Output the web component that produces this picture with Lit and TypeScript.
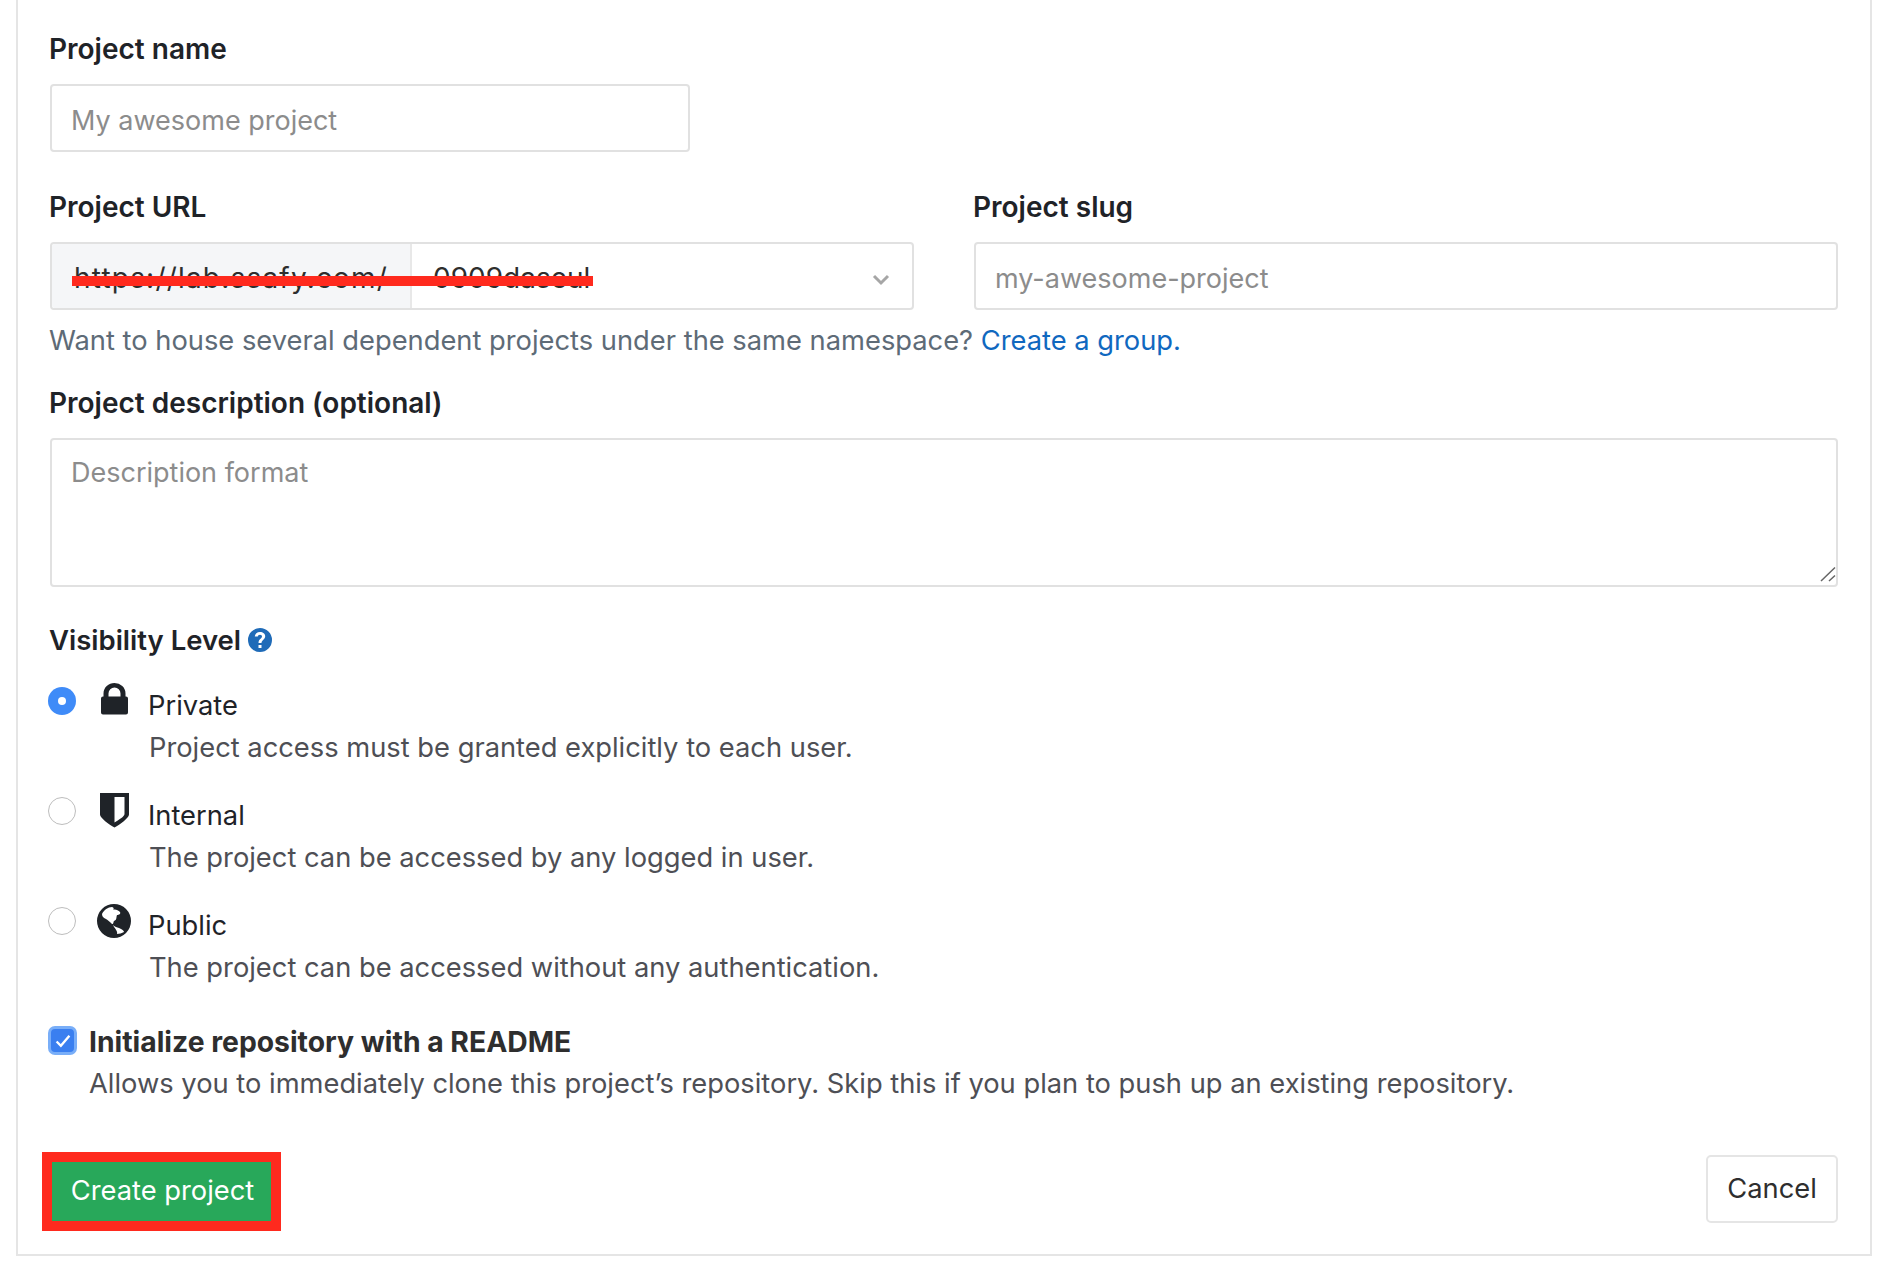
import { LitElement, html, css, svg } from "lit";
import { customElement } from "lit/decorators.js";

const lock = svg`<path fill-rule="evenodd" d="M2.500 13.500V10.500a11 10.500 0 0 1 22 0v3h.5a2 2 0 0 1 2 2V29.500a2 2 0 0 1-2 2H2a2 2 0 0 1-2-2V15.500a2 2 0 0 1 2-2zM7.500 13.500h12V10.500a6 6 0 0 0-12 0z"/>`;
const shield = svg`<path fill-rule="evenodd" d="M0 0h29v21.500c0 3.500-9 10-14.500 13C9 31.500 0 25 0 21.500zM14.500 4v25.500c4-2.500 10-6 10-8.500V4z"/>`;

@customElement("app-root")
export class AppRoot extends LitElement {
  static styles = css`
    :host {
      display: block;
      height: 1272px;
      box-sizing: border-box;
      padding: 0 14px 0 16px;
      background: #fff;
      font-family: Inter, "Liberation Sans", sans-serif;
      font-size: 27.300px;
      line-height: 36px;
      color: #1f2328;
    }
    .panel {
      box-sizing: border-box;
      height: 1256px;
      border: 2px solid #e5e5e5;
      border-top: 0;
      padding: 30px 32px 0 32px;
    }
    label.title {
      display: block;
      font-size: 28px;
      font-weight: 600;
      padding-top: 1px;
      margin: 0 0 17px -1px;
    }
    label.desc-label { margin-top: 25px; }
    .field {
      box-sizing: border-box;
      display: block;
      width: 100%;
      height: 68px;
      padding: 4px 19px 0;
      border: 2px solid #e1e1e1;
      border-radius: 4px;
      background: #fff;
      color: #2e2e2e;
      font: inherit;
      font-size: 27px;
      outline: none;
    }
    .field::placeholder { color: #8c8c8c; opacity: 1; }
    .name { width: 640px; }
    .url-row {
      display: grid;
      grid-template-columns: 864px 864px;
      column-gap: 60px;
      margin-top: 36px;
    }
    .group {
      position: relative;
      display: flex;
      height: 68px;
      box-sizing: border-box;
      border: 2px solid #e1e1e1;
      border-radius: 4px;
      align-items: center;
      color: #2e2e2e;
      font-size: 28px;
    }
    .addon {
      width: 360px;
      height: 100%;
      flex: none;
      box-sizing: border-box;
      padding: 4px 0 0 22px;
      letter-spacing: 1.200px;
      background: #f5f6f8;
      border-right: 2px solid #e8e8e8;
      border-radius: 3px 0 0 3px;
      display: flex;
      align-items: center;
      white-space: nowrap;
    }
    .ns {
      flex: 1;
      padding: 4px 22px 0 21px;
      display: flex;
      align-items: center;
      justify-content: space-between;
    }
    .chev { width: 18px; height: 12px; fill: none; stroke: #a6a6a6; stroke-width: 3; margin-top: 4px; }
    .redact {
      position: absolute;
      left: 20px;
      top: 32px;
      width: 521px;
      height: 10px;
      background: #ff2a1e;
    }
    .help { margin: 13px 0 0 -1px; color: #5e6b77; }
    a { color: #1068bf; text-decoration: none; }
    .area { position: relative; }
    textarea.field {
      height: 149px;
      padding-top: 15px;
      resize: none;
    }
    .grip {
      position: absolute;
      right: 2px;
      bottom: 5px;
      width: 16px;
      height: 16px;
      fill: none;
      stroke: #666;
      stroke-width: 1.500;
    }
    .vis-label {
      margin: 35px 0 0 -1px;
      font-size: 27.500px;
      font-weight: 600;
      display: flex;
      align-items: center;
      gap: 7px;
    }
    .vis-label svg { width: 24px; height: 24px; }
    .options { margin-top: 29px; display: flex; flex-direction: column; gap: 31px; }
    .opt {
      display: grid;
      grid-template-columns: 28px 73px 1fr;
      row-gap: 6px;
      margin-left: -2px;
    }
    .opt-name { margin-left: -1px; padding-top: 1px; }
    .radio {
      box-sizing: border-box;
      width: 28px;
      height: 28px;
      border-radius: 50%;
      border: 1.500px solid #bdbdbd;
      background: #fff;
      display: flex;
      align-items: center;
      justify-content: center;
    }
    .radio.on { background: #3f8bf8; border: 0; }
    .radio.on::after { content: ""; width: 8px; height: 8px; border-radius: 50%; background: #fff; }
    .ic { grid-row: 1; grid-column: 2; display: flex; justify-content: flex-start; }
    .ic svg { fill: #1f2328; overflow: visible; }
    .ic .i-lock { margin: -4px 0 0 25px; }
    .ic .i-shield { margin: -4px 0 0 24px; }
    .ic .i-globe { margin: -3px 0 0 21px; }
    .sub { grid-column: 3; color: #4e4f55; }
    .check { margin-top: 38px; display: grid; grid-template-columns: 29px 1fr; column-gap: 12px; row-gap: 6px; margin-left: -2px; }
    .box {
      box-sizing: border-box;
      width: 29px;
      height: 29px;
      margin-top: 2px;
      border-radius: 7px;
      background: #3a7ff0;
      border: 3px solid #79aef8;
      display: flex;
      align-items: center;
      justify-content: center;
    }
    .box svg { width: 16px; height: 14px; fill: none; stroke: #fff; stroke-width: 2.200; }
    .check b { font-size: 28.300px; font-weight: 700; color: #2e2e2e; }
    .check .sub { grid-column: 2; }
    .footer {
      margin-top: 50px;
      display: flex;
      justify-content: space-between;
      align-items: flex-start;
      margin-left: -8px;
    }
    .mark { border: 10px solid #ff2a1e; }
    button {
      display: block;
      font: inherit;
      cursor: pointer;
    }
    .create {
      width: 219px;
      height: 59px;
      padding: 0 0 2px 2px;
      border: 0;
      background: #28a85a;
      color: #fff;
    }
    .cancel {
      margin-top: 3px;
      box-sizing: border-box;
      width: 132px;
      height: 68px;
      padding: 0;
      background: #fff;
      color: #2e2e2e;
      border: 2px solid #e5e5e5;
      border-radius: 5px;
    }
  `;

  private option(on: boolean, icon: unknown, name: string, sub: string) {
    return html`<div class="opt">
      <span class="radio ${on ? "on" : ""}"></span>
      <span class="ic">${icon}</span>
      <span class="opt-name">${name}</span>
      <span class="sub">${sub}</span>
    </div>`;
  }

  render() {
    const lockI = html`<svg class="i-lock" width="27" height="32" viewBox="0 0 27 32">${lock}</svg>`;
    const shieldI = html`<svg class="i-shield" width="29" height="35" viewBox="0 0 29 35">${shield}</svg>`;
    const globeI = html`<svg class="i-globe" width="34" height="34" viewBox="0 0 34 34">
      <path fill-rule="evenodd" d="M17 0a17 17 0 1 1 0 34a17 17 0 0 1 0-34zM5 10C7 6 11 3 15 3C17 3.500 17 5 16 6C18 5 21 6 23 8C24 10 22 11 20 11C19 14 20 16 17 17C16 18 17 20 15 20C13 18 11 16 9 15C7 14 5 13 5 10zM16 21C18 23 20 23 22 24C25 25 27 27 27 28C25 29 22 30 20 30C21 27 18 25 16 21z"/>
    </svg>`;
    return html`<div class="panel">
      <label class="title">Project name</label>
      <input class="field name" placeholder="My awesome project" />

      <div class="url-row">
        <div>
          <label class="title">Project URL</label>
          <div class="group">
            <span class="addon">https://lab.ssafy.com/</span>
            <span class="ns">0909daseul
              <svg class="chev" viewBox="0 0 18 12"><path d="M2 2l7 7l7-7"/></svg>
            </span>
            <span class="redact"></span>
          </div>
        </div>
        <div>
          <label class="title">Project slug</label>
          <input class="field" placeholder="my-awesome-project" />
        </div>
      </div>
      <div class="help">Want to house several dependent projects under the same namespace? <a>Create a group.</a></div>

      <label class="title desc-label">Project description (optional)</label>
      <div class="area">
        <textarea class="field" placeholder="Description format"></textarea>
        <svg class="grip" viewBox="0 0 16 16"><path d="M1 15L15 1.500M9 15l6-5.500"/></svg>
      </div>

      <div class="vis-label">Visibility Level
        <svg viewBox="0 0 24 24"><path fill="#1f6bb8" fill-rule="evenodd" d="M12 0a12 12 0 1 1 0 24a12 12 0 0 1 0-24zM10.500 17v3h3v-3zM12 4c-3 0-5 1.800-5.200 4.500h3c.1-1 1-1.700 2.200-1.700s2 .7 2 1.700c0 2-3.500 2.500-3.500 6.500h3c0-3 3.700-3.500 3.700-6.800C17.200 5.700 15 4 12 4z"/></svg>
      </div>
      <div class="options">
        ${this.option(true, lockI, "Private", "Project access must be granted explicitly to each user.")}
        ${this.option(false, shieldI, "Internal", "The project can be accessed by any logged in user.")}
        ${this.option(false, globeI, "Public", "The project can be accessed without any authentication.")}
      </div>

      <div class="check">
        <span class="box"><svg viewBox="0 0 15 13"><path d="M1.500 7l4 4l8-9.500"/></svg></span>
        <b>Initialize repository with a README</b>
        <span class="sub">Allows you to immediately clone this project’s repository. Skip this if you plan to push up an existing repository.</span>
      </div>

      <div class="footer">
        <div class="mark"><button class="create">Create project</button></div>
        <button class="cancel">Cancel</button>
      </div>
    </div>`;
  }
}
